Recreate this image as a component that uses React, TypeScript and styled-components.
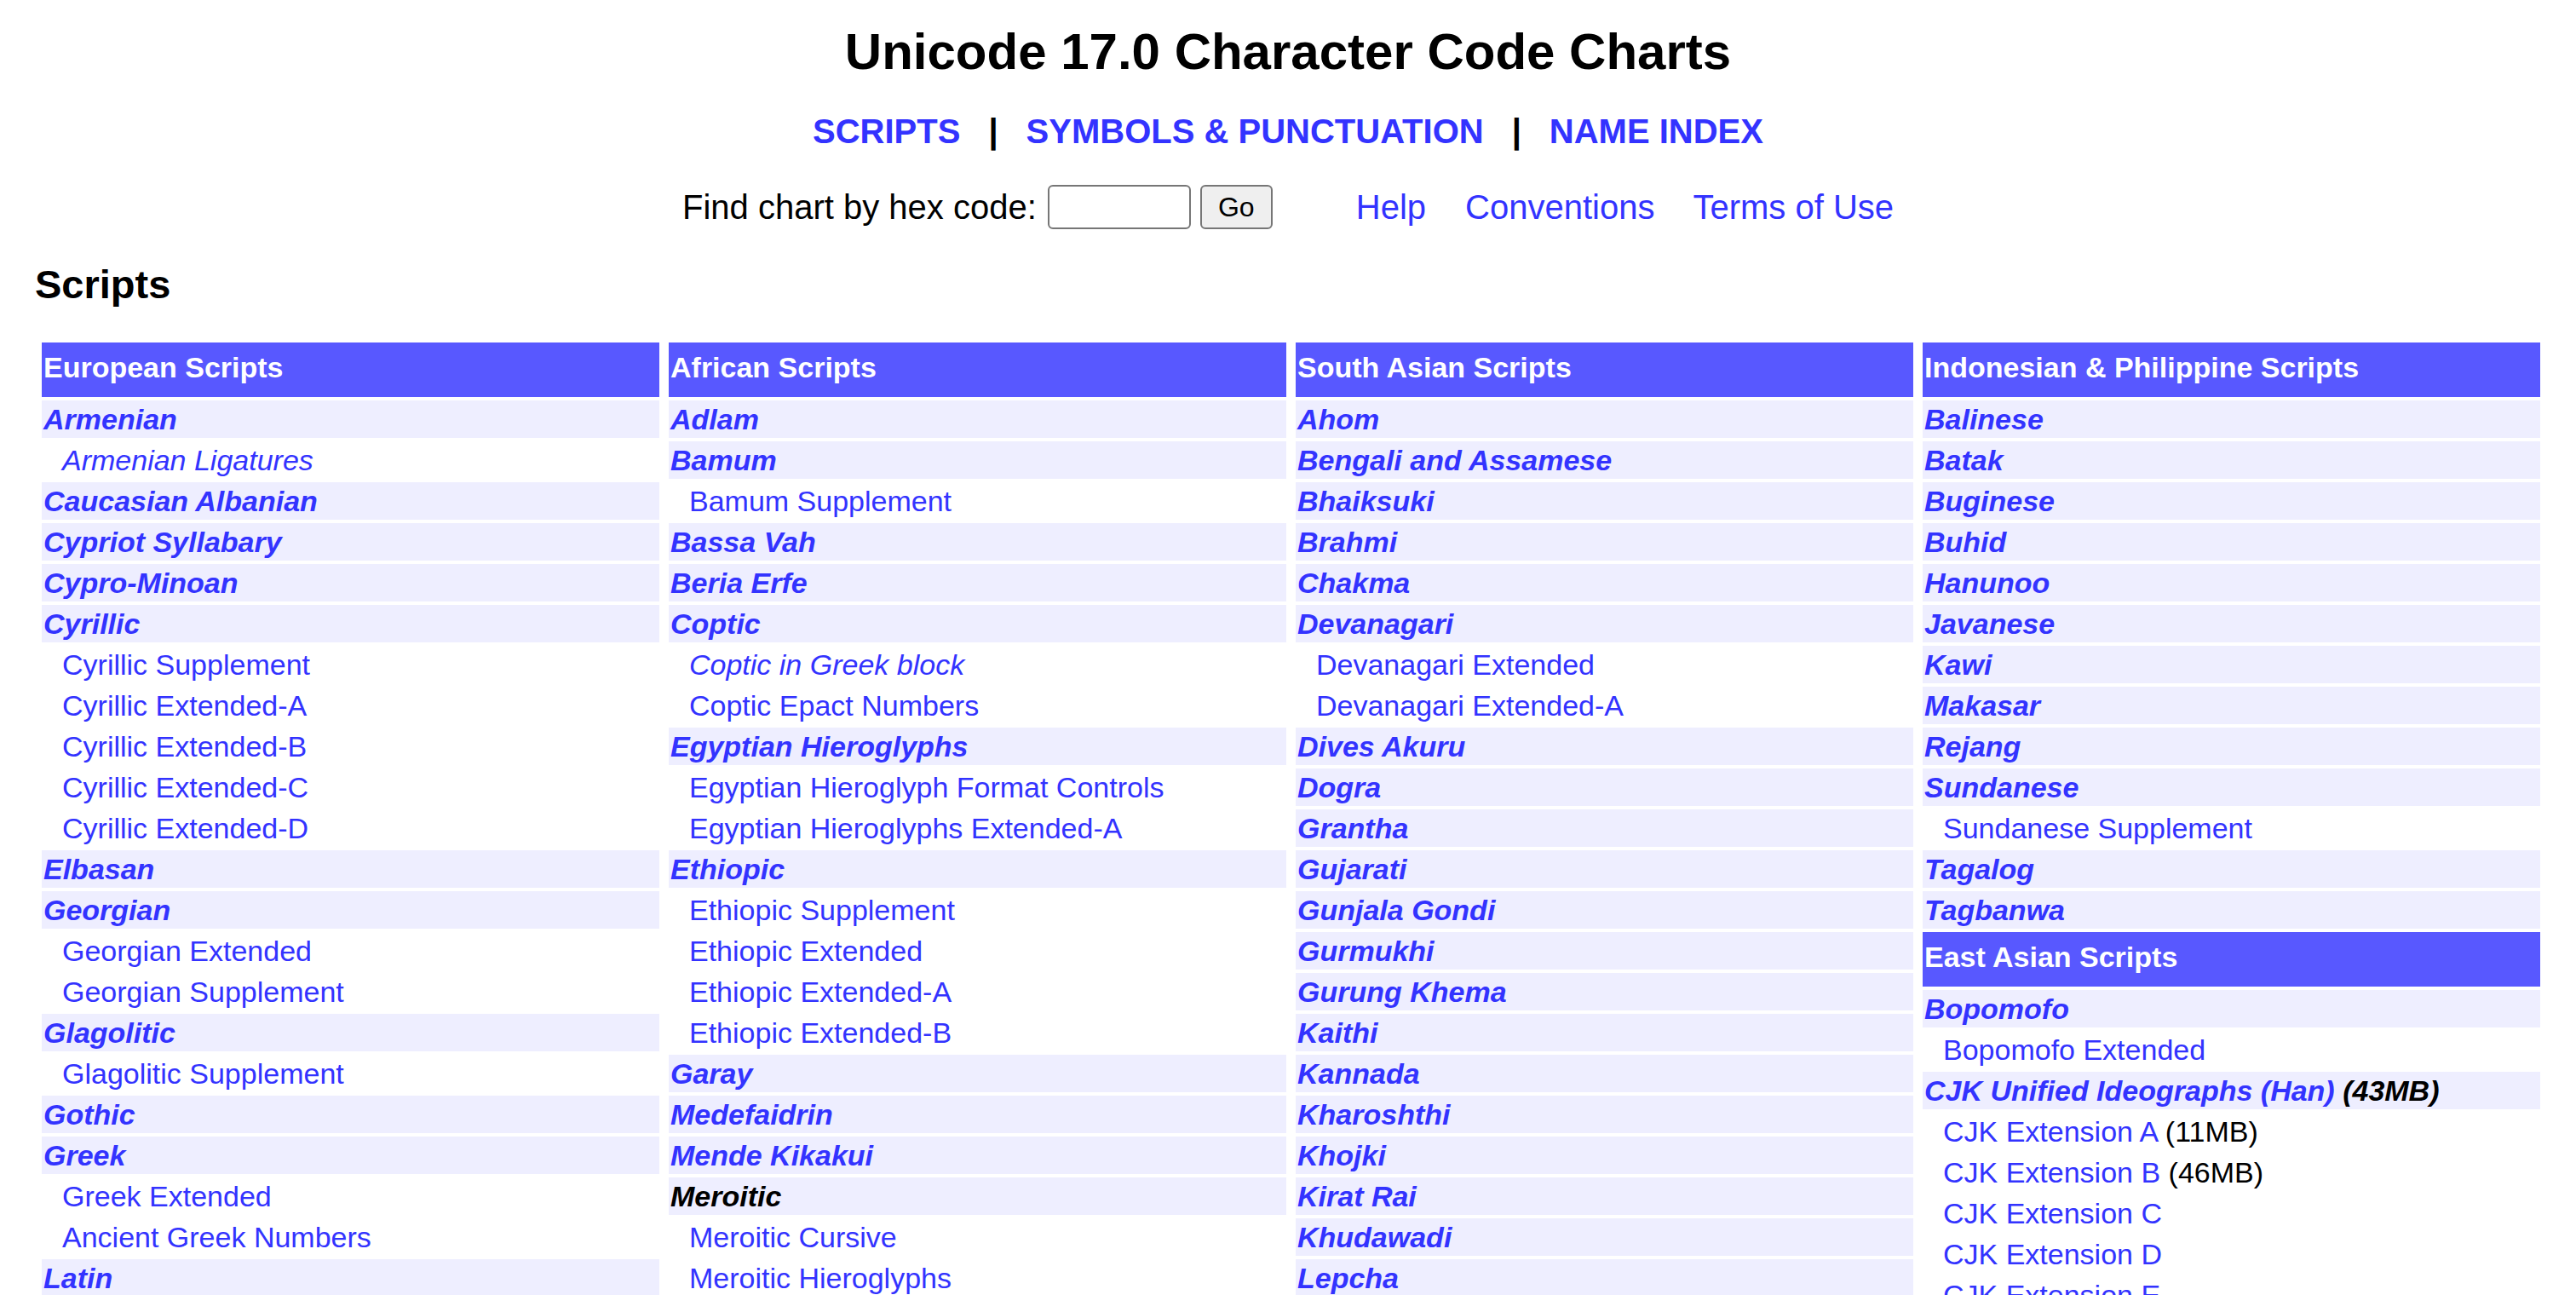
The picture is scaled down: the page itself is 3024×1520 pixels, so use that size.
import React from "react";
import styled, { createGlobalStyle } from "styled-components";

const Global = createGlobalStyle`
  html, body { margin: 0; padding: 0; background: #ffffff; }
  body { font-family: "Liberation Sans", Arial, Helvetica, sans-serif; color: #000; }
`;

const BLUE = "#3333FF";

const Page = styled.div`
  padding-top: 26px;
  padding-bottom: 40px;
`;

const Title = styled.h1`
  margin: 0;
  text-align: center;
  font-size: 60px;
  line-height: 70px;
  font-weight: 700;
`;

const Nav = styled.nav`
  margin-top: 35px;
  text-align: center;
  font-size: 40px;
  line-height: 46px;
  font-weight: 700;
`;

const NavLink = styled.a`
  color: ${BLUE};
  text-decoration: none;
`;

const Sep = styled.span`
  display: inline-block;
  margin: 0 33px;
  color: #000;
`;

const FindRow = styled.div`
  margin-top: 40px;
  display: flex;
  justify-content: center;
  align-items: center;
  height: 52px;
  font-size: 40px;
  line-height: 46px;
`;

const FindLabel = styled.span`
  margin-right: 13px;
`;

const HexInput = styled.input`
  box-sizing: border-box;
  width: 168px;
  height: 52px;
  border: 2px solid #767676;
  border-radius: 6px;
  background: #fff;
  font-size: 30px;
  padding: 0 6px;
  margin: 0 11px 0 0;
`;

const GoButton = styled.button`
  box-sizing: border-box;
  width: 85px;
  height: 52px;
  border: 2px solid #767676;
  border-radius: 6px;
  background: #efefef;
  color: #000;
  font-family: "Liberation Sans", Arial, sans-serif;
  font-size: 32px;
  padding: 0;
  margin: 0 98px 0 0;
`;

const HelpLink = styled.a<{ $gap?: number }>`
  color: ${BLUE};
  text-decoration: none;
  margin-left: ${(p) => p.$gap ?? 0}px;
`;

const SectionTitle = styled.h2`
  margin: 38px 0 0 0;
  padding-left: 41px;
  font-size: 47px;
  line-height: 54px;
  font-weight: 700;
`;

const Grid = styled.div`
  margin: 41px 0 0 49px;
  display: grid;
  grid-template-columns: repeat(4, 725px);
  column-gap: 11px;
  align-items: start;
`;

const Column = styled.div`
  display: flex;
  flex-direction: column;
  gap: 4px;
`;

const Header = styled.div`
  height: 64px;
  box-sizing: border-box;
  padding: 0 0 5px 2px;
  line-height: 59px;
  background: #5858ff;
  color: #ffffff;
  font-size: 34px;
  font-weight: 700;
  white-space: nowrap;
`;

const Row = styled.div<{ $sub?: boolean }>`
  height: 44px;
  line-height: 44px;
  font-size: 34px;
  padding-left: ${(p) => (p.$sub ? "24px" : "2px")};
  background: ${(p) => (p.$sub ? "#ffffff" : "#eeeeff")};
  white-space: nowrap;
  overflow: hidden;
`;

const ItemLink = styled.a<{ $main?: boolean; $italic?: boolean; $plain?: boolean }>`
  color: ${(p) => (p.$plain ? "#000" : BLUE)};
  text-decoration: none;
  font-weight: ${(p) => (p.$main ? 700 : 400)};
  font-style: ${(p) => (p.$main || p.$italic ? "italic" : "normal")};
`;

const Note = styled.span<{ $main?: boolean }>`
  color: #000;
  font-weight: ${(p) => (p.$main ? 700 : 400)};
  font-style: ${(p) => (p.$main ? "italic" : "normal")};
`;

type Entry =
  | { t: "h"; label: string }
  | { t: "m"; label: string; plain?: boolean; note?: string }
  | { t: "s"; label: string; italic?: boolean; note?: string };

const columns: Entry[][] = [
  [
    { t: "h", label: "European Scripts" },
    { t: "m", label: "Armenian" },
    { t: "s", label: "Armenian Ligatures", italic: true },
    { t: "m", label: "Caucasian Albanian" },
    { t: "m", label: "Cypriot Syllabary" },
    { t: "m", label: "Cypro-Minoan" },
    { t: "m", label: "Cyrillic" },
    { t: "s", label: "Cyrillic Supplement" },
    { t: "s", label: "Cyrillic Extended-A" },
    { t: "s", label: "Cyrillic Extended-B" },
    { t: "s", label: "Cyrillic Extended-C" },
    { t: "s", label: "Cyrillic Extended-D" },
    { t: "m", label: "Elbasan" },
    { t: "m", label: "Georgian" },
    { t: "s", label: "Georgian Extended" },
    { t: "s", label: "Georgian Supplement" },
    { t: "m", label: "Glagolitic" },
    { t: "s", label: "Glagolitic Supplement" },
    { t: "m", label: "Gothic" },
    { t: "m", label: "Greek" },
    { t: "s", label: "Greek Extended" },
    { t: "s", label: "Ancient Greek Numbers" },
    { t: "m", label: "Latin" },
    { t: "s", label: "Basic Latin (ASCII)" },
    { t: "s", label: "Latin-1 Supplement" },
    { t: "s", label: "Latin Extended-A" },
    { t: "s", label: "Latin Extended-B" },
  ],
  [
    { t: "h", label: "African Scripts" },
    { t: "m", label: "Adlam" },
    { t: "m", label: "Bamum" },
    { t: "s", label: "Bamum Supplement" },
    { t: "m", label: "Bassa Vah" },
    { t: "m", label: "Beria Erfe" },
    { t: "m", label: "Coptic" },
    { t: "s", label: "Coptic in Greek block", italic: true },
    { t: "s", label: "Coptic Epact Numbers" },
    { t: "m", label: "Egyptian Hieroglyphs" },
    { t: "s", label: "Egyptian Hieroglyph Format Controls" },
    { t: "s", label: "Egyptian Hieroglyphs Extended-A" },
    { t: "m", label: "Ethiopic" },
    { t: "s", label: "Ethiopic Supplement" },
    { t: "s", label: "Ethiopic Extended" },
    { t: "s", label: "Ethiopic Extended-A" },
    { t: "s", label: "Ethiopic Extended-B" },
    { t: "m", label: "Garay" },
    { t: "m", label: "Medefaidrin" },
    { t: "m", label: "Mende Kikakui" },
    { t: "m", label: "Meroitic", plain: true },
    { t: "s", label: "Meroitic Cursive" },
    { t: "s", label: "Meroitic Hieroglyphs" },
    { t: "m", label: "N'Ko" },
    { t: "m", label: "Osmanya" },
    { t: "m", label: "Tifinagh" },
    { t: "m", label: "Vai" },
  ],
  [
    { t: "h", label: "South Asian Scripts" },
    { t: "m", label: "Ahom" },
    { t: "m", label: "Bengali and Assamese" },
    { t: "m", label: "Bhaiksuki" },
    { t: "m", label: "Brahmi" },
    { t: "m", label: "Chakma" },
    { t: "m", label: "Devanagari" },
    { t: "s", label: "Devanagari Extended" },
    { t: "s", label: "Devanagari Extended-A" },
    { t: "m", label: "Dives Akuru" },
    { t: "m", label: "Dogra" },
    { t: "m", label: "Grantha" },
    { t: "m", label: "Gujarati" },
    { t: "m", label: "Gunjala Gondi" },
    { t: "m", label: "Gurmukhi" },
    { t: "m", label: "Gurung Khema" },
    { t: "m", label: "Kaithi" },
    { t: "m", label: "Kannada" },
    { t: "m", label: "Kharoshthi" },
    { t: "m", label: "Khojki" },
    { t: "m", label: "Kirat Rai" },
    { t: "m", label: "Khudawadi" },
    { t: "m", label: "Lepcha" },
    { t: "m", label: "Limbu" },
    { t: "m", label: "Mahajani" },
    { t: "m", label: "Malayalam" },
    { t: "m", label: "Masaram Gondi" },
  ],
  [
    { t: "h", label: "Indonesian & Philippine Scripts" },
    { t: "m", label: "Balinese" },
    { t: "m", label: "Batak" },
    { t: "m", label: "Buginese" },
    { t: "m", label: "Buhid" },
    { t: "m", label: "Hanunoo" },
    { t: "m", label: "Javanese" },
    { t: "m", label: "Kawi" },
    { t: "m", label: "Makasar" },
    { t: "m", label: "Rejang" },
    { t: "m", label: "Sundanese" },
    { t: "s", label: "Sundanese Supplement" },
    { t: "m", label: "Tagalog" },
    { t: "m", label: "Tagbanwa" },
    { t: "h", label: "East Asian Scripts" },
    { t: "m", label: "Bopomofo" },
    { t: "s", label: "Bopomofo Extended" },
    { t: "m", label: "CJK Unified Ideographs (Han)", note: "(43MB)" },
    { t: "s", label: "CJK Extension A", note: "(11MB)" },
    { t: "s", label: "CJK Extension B", note: "(46MB)" },
    { t: "s", label: "CJK Extension C" },
    { t: "s", label: "CJK Extension D" },
    { t: "s", label: "CJK Extension E" },
    { t: "s", label: "CJK Extension F" },
    { t: "s", label: "CJK Extension G" },
    { t: "s", label: "CJK Extension H" },
  ],
];

function renderEntry(e: Entry, i: number) {
  if (e.t === "h") return <Header key={i}>{e.label}</Header>;
  if (e.t === "m")
    return (
      <Row key={i}>
        <ItemLink $main $plain={e.plain} href={e.plain ? undefined : "#"}>
          {e.label}
        </ItemLink>
        {e.note && <Note $main> {e.note}</Note>}
      </Row>
    );
  return (
    <Row key={i} $sub>
      <ItemLink $italic={e.italic} href="#">
        {e.label}
      </ItemLink>
      {e.note && <Note> {e.note}</Note>}
    </Row>
  );
}

export default function App() {
  return (
    <>
      <Global />
      <Page>
        <Title>Unicode 17.0 Character Code Charts</Title>
        <Nav>
          <NavLink href="#">SCRIPTS</NavLink>
          <Sep>|</Sep>
          <NavLink href="#">SYMBOLS &amp; PUNCTUATION</NavLink>
          <Sep>|</Sep>
          <NavLink href="#">NAME INDEX</NavLink>
        </Nav>
        <FindRow>
          <FindLabel>Find chart by hex code:</FindLabel>
          <HexInput type="text" />
          <GoButton type="button">Go</GoButton>
          <HelpLink href="#">Help</HelpLink>
          <HelpLink href="#" $gap={46}>Conventions</HelpLink>
          <HelpLink href="#" $gap={45}>Terms of Use</HelpLink>
        </FindRow>
        <SectionTitle>Scripts</SectionTitle>
        <Grid>
          {columns.map((col, ci) => (
            <Column key={ci}>{col.map(renderEntry)}</Column>
          ))}
        </Grid>
      </Page>
    </>
  );
}
